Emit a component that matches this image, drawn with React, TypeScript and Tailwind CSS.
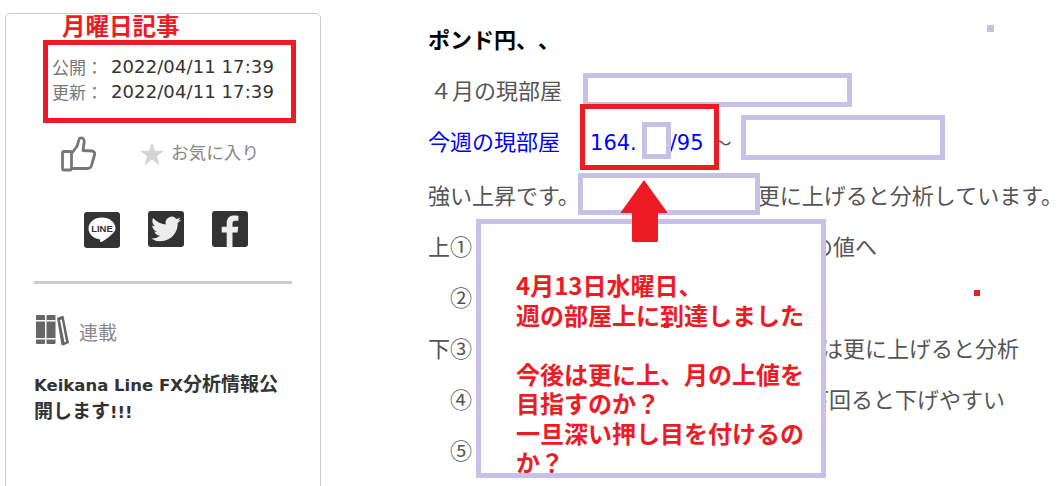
const jp = "font-['Noto_Sans_CJK_JP','Noto_Sans',sans-serif]";

function ThumbIcon() {
  return (
    <svg viewBox="0 0 35 36" className="h-9 w-[35px]" fill="none" stroke="#777" strokeWidth="2.800" strokeLinejoin="round">
      <rect x="1.500" y="15.500" width="9" height="18.500" rx="1.500" />
      <path d="M10.500 17.500L15.500 11C17.500 8 17 4.500 18.500 2.500C21 .8 23.500 2.500 23.200 6L22 14.500L31 15C33.500 15.300 34 17 33.500 19L30.500 29.500C30 31.500 28.500 32.500 26.500 32.500H10.500" />
    </svg>
  );
}

function StarIcon() {
  return (
    <svg viewBox="0 0 24 24" className="ml-[44px] h-6 w-6">
      <path d="M12 .5L15 8.800H24L16.800 14.200L19.400 23L12 17.800L4.600 23L7.200 14.200L0 8.800H9z" fill="#d4d4d4" />
    </svg>
  );
}

function LineIcon() {
  return (
    <svg viewBox="0 0 36 36" className="mt-px h-9 w-9">
      <rect width="36" height="36" rx="3" fill="#333" />
      <path
        d="M18 5.500c-7.600 0-13.500 4.900-13.500 11 0 5.500 4.600 9.800 11 10.800.9.200.8 1 .6 1.800-.1.800.2 1.300 1.200.8 2.300-1.200 7.200-4.200 10.100-7.200 2.500-2.100 4.100-4.100 4.100-6.200C31.500 10.400 25.600 5.500 18 5.500z"
        fill="#fff"
      />
      <text x="18" y="20" textAnchor="middle" fontSize="9.500" fontWeight="700" fontFamily="Liberation Sans" fill="#333">
        LINE
      </text>
    </svg>
  );
}

function TwitterIcon() {
  return (
    <svg viewBox="0 0 36 36" className="h-9 w-9">
      <rect width="36" height="36" rx="3" fill="#333" />
      <path
        d="M33 8.800c-1.100.5-2.300.8-3.500 1 1.300-.8 2.200-2 2.700-3.400-1.200.7-2.500 1.200-3.900 1.500A6.100 6.100 0 0 0 17.800 13.500C12.700 13.200 8.200 10.800 5.200 7.100c-1.600 2.800-.8 6.300 1.900 8.100-1 0-1.900-.3-2.800-.8 0 3 2.100 5.500 4.900 6.100-.9.200-1.800.3-2.800.1.800 2.400 3 4.200 5.700 4.200A12.300 12.300 0 0 1 3 27.400 17.400 17.400 0 0 0 12.400 30.200c11.300 0 17.700-9.500 17.300-18.100 1.300-.9 2.400-2 3.300-3.300z"
        fill="#eee"
      />
    </svg>
  );
}

function FacebookIcon() {
  return (
    <svg viewBox="0 0 36 36" className="h-9 w-9">
      <rect width="36" height="36" rx="3" fill="#333" />
      <path
        d="M20.500 36V21.500h5l.8-5.700h-5.800v-3.300c0-1.700.6-2.800 2.900-2.800h3V4.700c-.6-.1-2.400-.2-4.400-.2-4.400 0-7.300 2.600-7.300 7.300v4h-5v5.700h5V36z"
        fill="#eee"
      />
    </svg>
  );
}

function BooksIcon() {
  return (
    <svg viewBox="0 0 33 32" className="h-8 w-[33px]" fill="#666">
      <rect x="0" y="1" width="9" height="29" rx="1" />
      <rect x="10.500" y="1" width="9" height="29" rx="1" />
      <rect x="0" y="6" width="9" height="1.500" fill="#fff" />
      <rect x="10.500" y="6" width="9" height="1.500" fill="#fff" />
      <rect x="0" y="24" width="9" height="1.500" fill="#fff" />
      <rect x="10.500" y="24" width="9" height="1.500" fill="#fff" />
      <path d="M21 4l5-2 1.500 0 5.500 27-6 2.500-1.500-.5zM24 6l4.500 22.500 1.500-.7L25.800 5.500z" fillRule="evenodd" />
    </svg>
  );
}

function Sidebar() {
  return (
    <aside className={`ml-[5px] mt-[13px] h-[500px] w-[316px] shrink-0 rounded-t-[5px] border border-[#ccc] ${jp}`}>
      <dl className="ml-[46px] mt-[40px] text-[17px] leading-[25px] text-[#333]">
        <div className="flex">
          <dt className="w-[59px] text-[#777]">公開：</dt>
          <dd className="font-['DejaVu_Sans'] text-[18px] tracking-[0.1px]">2022/04/11 17:39</dd>
        </div>
        <div className="flex">
          <dt className="w-[59px] text-[#777]">更新：</dt>
          <dd className="font-['DejaVu_Sans'] text-[18px] tracking-[0.1px]">2022/04/11 17:39</dd>
        </div>
      </dl>

      <div className="ml-[55px] mt-[32px] flex h-9 items-center">
        <ThumbIcon />
        <StarIcon />
        <span className="ml-[7px] -translate-y-[2px] text-[17.600px] text-[#888]">お気に入り</span>
      </div>

      <div className="ml-[78px] mt-[39px] flex items-start gap-[28px]">
        <LineIcon />
        <TwitterIcon />
        <FacebookIcon />
      </div>

      <hr className="mx-[28px] mt-[33px] h-[3px] border-0 bg-[#ccc]" />

      <div className="ml-[30px] mt-[30px] flex items-center gap-[10px]">
        <BooksIcon />
        <span className="translate-y-[2px] text-[19px] text-[#888]">連載</span>
      </div>

      <p className="ml-[28px] mt-[23px] w-[265px] text-[19px] leading-[27px] font-bold text-[#333]">
        <span className="font-['DejaVu_Sans'] text-[16.500px] leading-none">Keikana Line FX</span>分析情報公
        <br />
        開します<span className="font-['DejaVu_Sans'] text-[16.500px] leading-none">!!!</span>
      </p>
    </aside>
  );
}

function Article() {
  return (
    <main className={`ml-[107px] mt-[13px] shrink-0 text-[22px] leading-[51px] whitespace-nowrap text-[#555] [text-spacing-trim:space-all] ${jp}`}>
      <p className="font-bold text-black">ポンド円、、</p>
      <p className="pl-[2px]">４月の現部屋</p>
      <p className="text-[#00f]">
        今週の現部屋
        <span className="ml-[30px] font-['DejaVu_Sans'] text-[21px]">164.</span>
        <span className="ml-[33px] font-['DejaVu_Sans'] text-[21px]">/95</span>
        <span className="ml-[10px] text-[18px] text-[#555]">～</span>
      </p>
      <p>
        強い上昇です。
        <span className="ml-[178px]">更に上げると分析しています。</span>
      </p>
      <p>
        上①<span className="ml-[339px]">の値へ</span>
      </p>
      <p className="pl-[22px]">②</p>
      <p>
        下③<span className="ml-[349px]">は更に上げると分析</span>
      </p>
      <p className="pl-[22px]">
        ④<span className="ml-[335px]">下回ると下げやすい</span>
      </p>
      <p className="pl-[22px]">⑤</p>
    </main>
  );
}

function Annotations() {
  return (
    <>
      <span className={`absolute left-[62px] top-[8px] text-[23.500px] leading-[34px] font-bold text-[#ed1c24] ${jp}`}>
        月曜日記事
      </span>
      <div className="absolute left-[43px] top-[40px] h-[83px] w-[253px] border-[5px] border-[#ed1c24]" />

      <div className="absolute left-[987px] top-[25px] h-[7px] w-[7px] bg-[#c8c0e6]" />
      <div className="absolute left-[583px] top-[73px] h-[34px] w-[269px] border-[5px] border-[#c8c0e6] bg-white" />
      <div className="absolute left-[741px] top-[115px] h-[45px] w-[204px] border-[5px] border-[#c8c0e6] bg-white" />
      <div className="absolute left-[578px] top-[173px] h-[42px] w-[182px] border-[5px] border-[#c8c0e6] bg-white" />
      <div className="absolute left-[642px] top-[122px] h-[37px] w-[29px] border-[5px] border-[#c8c0e6] bg-white" />
      <div className="absolute left-[580px] top-[104px] h-[66px] w-[139px] border-[5px] border-[#ed1c24]" />

      <div className="absolute left-[476px] top-[219px] h-[259px] w-[350px] border-[5px] border-[#c8c0e6] bg-white">
        <p className={`ml-[35px] mt-[46px] w-[300px] text-[24px] leading-[29.500px] font-bold text-[#ed1c24] ${jp}`}>
          4月13日水曜日、
          <br />
          週の部屋上に到達しました
          <br />
          <br />
          今後は更に上、月の上値を
          <br />
          目指すのか？
          <br />
          一旦深い押し目を付けるの
          <br />
          か？
        </p>
      </div>

      <svg viewBox="0 0 46 62" className="absolute left-[621px] top-[180px] h-[62px] w-[46px]">
        <path d="M23 0L46 32V33H37V61L36 62H12L11 61V33H0V32z" fill="#ed1c24" />
      </svg>

      <div className="absolute left-[974px] top-[290px] h-[6px] w-[6px] bg-[#ed1c24]" />
      <div className="absolute left-[664px] top-[323px] h-[5px] w-[5px] bg-[#ed1c24]" />
    </>
  );
}

export default function App() {
  return (
    <div className="relative flex h-[486px] w-[1058px] items-start overflow-hidden bg-white">
      <Sidebar />
      <Article />
      <Annotations />
    </div>
  );
}
